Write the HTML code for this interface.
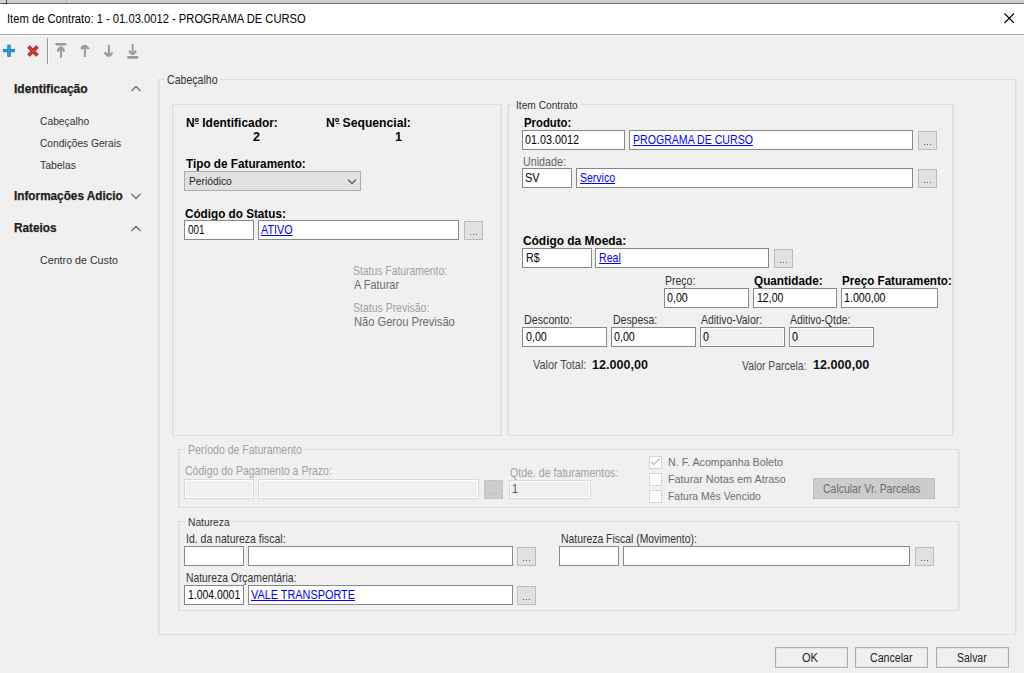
<!DOCTYPE html>
<html><head><meta charset="utf-8"><style>
html,body{margin:0;padding:0}
body{width:1024px;height:673px;position:relative;overflow:hidden;background:#f0f0f0;font-family:"Liberation Sans",sans-serif}
div{position:absolute}
.t{position:absolute;white-space:nowrap;line-height:0;transform-origin:0 0}
</style></head><body>
<div style="left:0px;top:0px;width:1024px;height:3px;background:#d0d0d0"></div>
<div style="left:0px;top:3px;width:1024px;height:1px;background:#6a6a6a"></div>
<div style="left:66px;top:0px;width:1px;height:3px;background:#b8b8b8"></div>
<div style="left:6px;top:0px;width:1px;height:3px;background:#3a4a50"></div>
<div style="left:3px;top:3px;width:4px;height:1px;background:#2a3035"></div>
<div style="left:4px;top:0px;width:1px;height:3px;background:#dedede"></div>
<div style="left:0px;top:4px;width:1024px;height:30px;background:#fff"></div>
<div style="left:0px;top:34px;width:1024px;height:1px;background:#a8a8a8"></div>
<div style="left:0px;top:35px;width:1024px;height:1px;background:#fbfbfb"></div>
<span class="t" style="left:6.60px;top:18.70px;font-size:12.65px;color:#000;transform:scaleX(0.8861);">Item de Contrato: 1 - 01.03.0012 - PROGRAMA DE CURSO</span>
<svg style="position:absolute;left:0;top:0" width="1024" height="34"><path d="M1004.5 13.5l9.5 9.5M1014 13.5l-9.5 9.5" stroke="#000" stroke-width="1.1" fill="none"/></svg>
<svg style="position:absolute;left:0;top:0" width="160" height="70">
<path d="M9 44.8v11.9M3.1 50.6h11.8" stroke="#22689a" stroke-width="3.4" fill="none"/>
<path d="M9 45.4v10.7M3.7 50.6h10.6" stroke="#1fa0dc" stroke-width="2.1" fill="none"/>
<path d="M28.5 46.5l9 9M37.5 46.5l-9 9" stroke="#8a3028" stroke-width="3.7" fill="none"/>
<path d="M28.8 46.8l8.4 8.4M37.2 46.8l-8.4 8.4" stroke="#da3530" stroke-width="2.5" fill="none"/>
<rect x="47" y="38" width="1" height="26" fill="#999"/><rect x="48" y="38" width="1" height="26" fill="#f9f9f9"/>
<g fill="#9c9c9c">
<polygon points="54.8,44.3 56.2,43 65.6,43 67,44.3 65.6,45.6 56.2,45.6"/>
<polygon points="57,51.7 57,49.3 60,46.3 61.8,46.3 64.8,49.3 64.8,51.7 63.3,51.7 61.9,50.4 60,50.4 58.5,51.7"/>
<rect x="60" y="50" width="2" height="7.8"/>
<polygon points="80.8,49.6 80.8,47.1 83.1,45 86.4,45 89.8,48.4 88,49.6 86.4,48.6 84,48.6 82.6,49.6"/>
<rect x="83.9" y="48" width="2" height="9"/>
<rect x="107.9" y="44.9" width="2" height="8.5"/>
<polygon points="103.6,53.3 105.2,51.8 107.2,53 110.6,53 112.6,51.8 112.6,54 110.5,56.8 107.1,56.8"/>
<rect x="131.7" y="44" width="2" height="7.5"/>
<polygon points="128.7,50.2 130.2,50.2 131.6,51.4 133.8,51.4 135.2,50.2 136.4,50.2 136.4,52.2 134,54.9 131.5,54.9 128.7,52.2"/>
<polygon points="126.6,57.35 127.9,56 137.5,56 138.9,57.35 137.5,58.7 127.9,58.7"/>
</g></svg>
<span class="t" style="left:14.00px;top:89.00px;font-size:12.06px;color:#1e1e1e;font-weight:bold;-webkit-text-stroke:0.25px #1e1e1e;">Identificação</span>
<span class="t" style="left:14.00px;top:196.30px;font-size:12.06px;color:#1e1e1e;font-weight:bold;transform:scaleX(0.9762);-webkit-text-stroke:0.25px #1e1e1e;">Informações Adicio</span>
<span class="t" style="left:14.00px;top:228.00px;font-size:12.06px;color:#1e1e1e;font-weight:bold;transform:scaleX(0.9782);-webkit-text-stroke:0.25px #1e1e1e;">Rateios</span>
<span class="t" style="left:39.80px;top:120.80px;font-size:11.63px;color:#333;transform:scaleX(0.8833);">Cabeçalho</span>
<span class="t" style="left:39.80px;top:142.70px;font-size:11.63px;color:#333;transform:scaleX(0.8769);">Condições Gerais</span>
<span class="t" style="left:40.00px;top:164.50px;font-size:11.63px;color:#333;transform:scaleX(0.8966);">Tabelas</span>
<span class="t" style="left:40.00px;top:260.10px;font-size:11.63px;color:#333;transform:scaleX(0.9193);">Centro de Custo</span>
<svg style="position:absolute;left:0;top:0" width="160" height="280">
<g stroke="#707070" stroke-width="1.3" fill="none">
<path d="M131.5 91l4.5-4.5 4.5 4.5"/>
<path d="M131.5 194l4.5 4.5 4.5-4.5"/>
<path d="M131.5 231l4.5-4.5 4.5 4.5"/>
</g></svg>
<div style="left:158px;top:79px;width:858px;height:556px;border:1px solid #dcdcdc;box-sizing:border-box"></div>
<div style="left:163.5px;top:74.2px;width:56.5px;height:13px;background:#f0f0f0"></div>
<span class="t" style="left:166.50px;top:80.20px;font-size:11.92px;color:#333;transform:scaleX(0.8875);">Cabeçalho</span>
<div style="left:172px;top:104px;width:330px;height:332px;border:1px solid #dcdcdc;box-sizing:border-box"></div>
<span class="t" style="left:186.00px;top:122.50px;font-size:13.08px;color:#000;font-weight:bold;transform:scaleX(0.9122);">Nº Identificador:</span>
<span class="t" style="left:253.30px;top:136.50px;font-size:13.52px;color:#000;font-weight:bold;transform:scaleX(0.93);">2</span>
<span class="t" style="left:326.00px;top:122.50px;font-size:13.08px;color:#000;font-weight:bold;transform:scaleX(0.9300);">Nº Sequencial:</span>
<span class="t" style="left:394.50px;top:136.50px;font-size:13.52px;color:#000;font-weight:bold;transform:scaleX(0.93);">1</span>
<div style="left:195px;top:123px;width:4px;height:1px;background:#444"></div>
<div style="left:336px;top:123px;width:4px;height:1px;background:#444"></div>
<span class="t" style="left:186.00px;top:163.50px;font-size:13.08px;color:#000;font-weight:bold;transform:scaleX(0.8975);">Tipo de Faturamento:</span>
<div style="left:184px;top:171px;width:177px;height:20px;border:1px solid #adadad;background:#e1e1e1;box-sizing:border-box"></div>
<span class="t" style="left:188.60px;top:180.80px;font-size:11.63px;color:#222;transform:scaleX(0.8836);">Periódico</span>
<svg style="position:absolute;left:0;top:0" width="400" height="200"><path d="M348 179.5l4 4 4-4" stroke="#606060" stroke-width="1.3" fill="none"/></svg>
<span class="t" style="left:185.00px;top:213.50px;font-size:13.08px;color:#000;font-weight:bold;transform:scaleX(0.8954);">Código do Status:</span>
<div style="left:184px;top:220px;width:70px;height:20px;border:1px solid #888;background:#fff;box-sizing:border-box"></div>
<span class="t" style="left:187.80px;top:229.90px;font-size:12.35px;color:#000;transform:scaleX(0.7961);">001</span>
<div style="left:258px;top:220px;width:201px;height:20px;border:1px solid #888;background:#fff;box-sizing:border-box"></div>
<span class="t" style="left:261.40px;top:229.90px;font-size:12.35px;color:#0000ff;transform:scaleX(0.8741);text-decoration:underline;">ATIVO</span>
<div style="left:464px;top:221px;width:19px;height:19px;border:1px solid #bcbcbc;background:#e1e1e1;box-sizing:border-box"></div>
<div style="left:470px;top:234px;width:1px;height:1px;background:#5a5070"></div>
<div style="left:473px;top:234px;width:1px;height:1px;background:#5a5070"></div>
<div style="left:476px;top:234px;width:1px;height:1px;background:#5a5070"></div>
<span class="t" style="left:353.00px;top:271.40px;font-size:11.92px;color:#a0a0a0;transform:scaleX(0.8720);">Status Faturamento:</span>
<span class="t" style="left:354.00px;top:285.00px;font-size:11.92px;color:#6d6d6d;transform:scaleX(0.9213);">A Faturar</span>
<span class="t" style="left:353.00px;top:308.00px;font-size:11.92px;color:#a0a0a0;transform:scaleX(0.8806);">Status Previsão:</span>
<span class="t" style="left:354.00px;top:322.00px;font-size:11.92px;color:#6d6d6d;transform:scaleX(0.9341);">Não Gerou Previsão</span>
<div style="left:508px;top:104px;width:445px;height:332px;border:1px solid #dcdcdc;box-sizing:border-box"></div>
<div style="left:513.4px;top:99px;width:67.89999999999998px;height:13px;background:#f0f0f0"></div>
<span class="t" style="left:516.40px;top:104.50px;font-size:11.63px;color:#333;transform:scaleX(0.8768);">Item Contrato</span>
<span class="t" style="left:523.70px;top:122.50px;font-size:13.08px;color:#000;font-weight:bold;transform:scaleX(0.8671);">Produto:</span>
<div style="left:522px;top:130px;width:103px;height:20px;border:1px solid #888;background:#fff;box-sizing:border-box"></div>
<span class="t" style="left:525.00px;top:139.50px;font-size:12.35px;color:#000;transform:scaleX(0.8738);">01.03.0012</span>
<div style="left:629px;top:130px;width:284px;height:20px;border:1px solid #888;background:#fff;box-sizing:border-box"></div>
<span class="t" style="left:632.50px;top:139.50px;font-size:12.35px;color:#0000ff;transform:scaleX(0.8571);text-decoration:underline;">PROGRAMA DE CURSO</span>
<div style="left:918px;top:131px;width:19px;height:19px;border:1px solid #bcbcbc;background:#e1e1e1;box-sizing:border-box"></div>
<div style="left:924px;top:144px;width:1px;height:1px;background:#5a5070"></div>
<div style="left:927px;top:144px;width:1px;height:1px;background:#5a5070"></div>
<div style="left:930px;top:144px;width:1px;height:1px;background:#5a5070"></div>
<span class="t" style="left:523.00px;top:161.50px;font-size:11.92px;color:#626262;transform:scaleX(0.9024);">Unidade:</span>
<div style="left:522px;top:168px;width:50px;height:20px;border:1px solid #888;background:#fff;box-sizing:border-box"></div>
<span class="t" style="left:525.00px;top:178.30px;font-size:12.35px;color:#000;transform:scaleX(0.8848);">SV</span>
<div style="left:576px;top:168px;width:337px;height:20px;border:1px solid #888;background:#fff;box-sizing:border-box"></div>
<span class="t" style="left:579.70px;top:178.30px;font-size:12.35px;color:#0000ff;transform:scaleX(0.8519);text-decoration:underline;">Servico</span>
<div style="left:918px;top:169px;width:19px;height:19px;border:1px solid #bcbcbc;background:#e1e1e1;box-sizing:border-box"></div>
<div style="left:924px;top:182px;width:1px;height:1px;background:#5a5070"></div>
<div style="left:927px;top:182px;width:1px;height:1px;background:#5a5070"></div>
<div style="left:930px;top:182px;width:1px;height:1px;background:#5a5070"></div>
<span class="t" style="left:522.70px;top:241.00px;font-size:13.08px;color:#000;font-weight:bold;transform:scaleX(0.9097);">Código da Moeda:</span>
<div style="left:522px;top:248px;width:70px;height:20px;border:1px solid #888;background:#fff;box-sizing:border-box"></div>
<span class="t" style="left:525.60px;top:258.00px;font-size:12.35px;color:#000;transform:scaleX(0.8608);">R$</span>
<div style="left:595px;top:248px;width:174px;height:20px;border:1px solid #888;background:#fff;box-sizing:border-box"></div>
<span class="t" style="left:599.20px;top:258.00px;font-size:12.35px;color:#0000ff;transform:scaleX(0.8583);text-decoration:underline;">Real</span>
<div style="left:774px;top:249px;width:19px;height:19px;border:1px solid #bcbcbc;background:#e1e1e1;box-sizing:border-box"></div>
<div style="left:780px;top:262px;width:1px;height:1px;background:#5a5070"></div>
<div style="left:783px;top:262px;width:1px;height:1px;background:#5a5070"></div>
<div style="left:786px;top:262px;width:1px;height:1px;background:#5a5070"></div>
<span class="t" style="left:665.20px;top:281.00px;font-size:11.92px;color:#333;transform:scaleX(0.8808);">Preço:</span>
<div style="left:664px;top:288px;width:85px;height:20px;border:1px solid #888;background:#fff;box-sizing:border-box"></div>
<span class="t" style="left:667.20px;top:298.20px;font-size:12.35px;color:#000;transform:scaleX(0.8649);">0,00</span>
<span class="t" style="left:753.90px;top:281.00px;font-size:13.08px;color:#000;font-weight:bold;transform:scaleX(0.8992);">Quantidade:</span>
<div style="left:753px;top:288px;width:84px;height:20px;border:1px solid #888;background:#fff;box-sizing:border-box"></div>
<span class="t" style="left:756.60px;top:298.20px;font-size:12.35px;color:#000;transform:scaleX(0.8544);">12,00</span>
<span class="t" style="left:842.00px;top:281.00px;font-size:13.08px;color:#000;font-weight:bold;transform:scaleX(0.8889);">Preço Faturamento:</span>
<div style="left:841px;top:288px;width:97px;height:20px;border:1px solid #888;background:#fff;box-sizing:border-box"></div>
<span class="t" style="left:844.00px;top:298.20px;font-size:12.35px;color:#000;transform:scaleX(0.8649);">1.000,00</span>
<span class="t" style="left:523.60px;top:320.00px;font-size:11.92px;color:#333;transform:scaleX(0.8993);">Desconto:</span>
<div style="left:522px;top:327px;width:85px;height:20px;border:1px solid #888;background:#fff;box-sizing:border-box"></div>
<span class="t" style="left:525.60px;top:337.00px;font-size:12.35px;color:#000;transform:scaleX(0.8649);">0,00</span>
<span class="t" style="left:612.50px;top:320.00px;font-size:11.92px;color:#333;transform:scaleX(0.8796);">Despesa:</span>
<div style="left:611px;top:327px;width:85px;height:20px;border:1px solid #888;background:#fff;box-sizing:border-box"></div>
<span class="t" style="left:614.20px;top:337.00px;font-size:12.35px;color:#000;transform:scaleX(0.8649);">0,00</span>
<span class="t" style="left:701.00px;top:320.00px;font-size:11.92px;color:#333;transform:scaleX(0.8727);">Aditivo-Valor:</span>
<div style="left:700px;top:327px;width:85px;height:20px;border:1px solid #888;background:#f0f0f0;box-sizing:border-box;box-shadow:inset 0 0 0 1px #fff"></div>
<span class="t" style="left:703.40px;top:337.00px;font-size:12.35px;color:#000;transform:scaleX(0.87);">0</span>
<span class="t" style="left:790.00px;top:319.80px;font-size:11.92px;color:#333;transform:scaleX(0.8779);">Aditivo-Qtde:</span>
<div style="left:789px;top:327px;width:85px;height:20px;border:1px solid #888;background:#f0f0f0;box-sizing:border-box;box-shadow:inset 0 0 0 1px #fff"></div>
<span class="t" style="left:792.10px;top:337.00px;font-size:12.35px;color:#000;transform:scaleX(0.87);">0</span>
<span class="t" style="left:532.70px;top:365.40px;font-size:11.92px;color:#4a4a4a;transform:scaleX(0.9119);">Valor Total:</span>
<span class="t" style="left:592.00px;top:364.90px;font-size:13.08px;color:#111;font-weight:bold;transform:scaleX(0.9605);">12.000,00</span>
<span class="t" style="left:742.20px;top:365.50px;font-size:11.92px;color:#4a4a4a;transform:scaleX(0.8707);">Valor Parcela:</span>
<span class="t" style="left:812.70px;top:365.00px;font-size:13.08px;color:#111;font-weight:bold;transform:scaleX(0.9657);">12.000,00</span>
<div style="left:178px;top:449px;width:781px;height:59px;border:1px solid #dcdcdc;box-sizing:border-box"></div>
<div style="left:184.5px;top:443.7px;width:119.69999999999999px;height:13px;background:#f0f0f0"></div>
<span class="t" style="left:187.50px;top:449.70px;font-size:11.92px;color:#a0a0a0;transform:scaleX(0.8814);">Período de Faturamento</span>
<span class="t" style="left:184.90px;top:471.20px;font-size:11.92px;color:#a0a0a0;transform:scaleX(0.8835);">Código do Pagamento a Prazo:</span>
<div style="left:184px;top:479px;width:70px;height:20px;border:1px solid #d9d9d9;background:#f0f0f0;box-sizing:border-box;box-shadow:inset 0 0 0 1px #fff"></div>
<div style="left:258px;top:479px;width:221px;height:20px;border:1px solid #d9d9d9;background:#f0f0f0;box-sizing:border-box;box-shadow:inset 0 0 0 1px #fff"></div>
<div style="left:484px;top:480px;width:19px;height:19px;border:1px solid #c4c4c4;background:#cccccc;box-sizing:border-box"></div>
<div style="left:490px;top:493px;width:1px;height:1px;background:#a0a0a0"></div>
<div style="left:493px;top:493px;width:1px;height:1px;background:#a0a0a0"></div>
<div style="left:496px;top:493px;width:1px;height:1px;background:#a0a0a0"></div>
<span class="t" style="left:510.00px;top:472.60px;font-size:11.92px;color:#a0a0a0;transform:scaleX(0.8891);">Qtde. de faturamentos:</span>
<div style="left:509px;top:480px;width:82px;height:19px;border:1px solid #d9d9d9;background:#f0f0f0;box-sizing:border-box;box-shadow:inset 0 0 0 1px #fff"></div>
<span class="t" style="left:512.20px;top:488.70px;font-size:12.35px;color:#555;transform:scaleX(0.87);">1</span>
<div style="left:649px;top:456px;width:13px;height:13px;border:1px solid #d4d4d4;background:#fff;box-sizing:border-box"></div>
<div style="left:649px;top:473px;width:13px;height:13px;border:1px solid #d4d4d4;background:#fff;box-sizing:border-box"></div>
<div style="left:649px;top:490px;width:13px;height:13px;border:1px solid #d4d4d4;background:#fff;box-sizing:border-box"></div>
<svg style="position:absolute;left:0;top:0" width="700" height="500"><path d="M651 461.6l2.7 2.9 6-5.9" stroke="#bdbdbd" stroke-width="1.3" fill="none"/></svg>
<span class="t" style="left:667.80px;top:462.10px;font-size:11.63px;color:#6d6d6d;transform:scaleX(0.9216);">N. F. Acompanha Boleto</span>
<span class="t" style="left:668.00px;top:478.80px;font-size:11.63px;color:#6d6d6d;transform:scaleX(0.9299);">Faturar Notas em Atraso</span>
<span class="t" style="left:668.00px;top:496.00px;font-size:11.63px;color:#6d6d6d;transform:scaleX(0.8977);">Fatura Mês Vencido</span>
<div style="left:813px;top:478px;width:122px;height:21px;border:1px solid #bfbfbf;background:#cccccc;box-sizing:border-box"></div>
<span class="t" style="left:823.00px;top:488.50px;font-size:12.35px;color:#6d6d6d;transform:scaleX(0.8481);">Calcular Vr. Parcelas</span>
<div style="left:178px;top:521px;width:781px;height:90px;border:1px solid #dcdcdc;box-sizing:border-box"></div>
<div style="left:184.6px;top:516.4px;width:47.70000000000002px;height:13px;background:#f0f0f0"></div>
<span class="t" style="left:187.60px;top:521.90px;font-size:11.63px;color:#333;transform:scaleX(0.8816);">Natureza</span>
<span class="t" style="left:186.00px;top:539.20px;font-size:11.92px;color:#333;transform:scaleX(0.8798);">Id. da natureza fiscal:</span>
<div style="left:184px;top:546px;width:60px;height:20px;border:1px solid #888;background:#fff;box-sizing:border-box"></div>
<div style="left:248px;top:546px;width:265px;height:20px;border:1px solid #888;background:#fff;box-sizing:border-box"></div>
<div style="left:517px;top:547px;width:19px;height:19px;border:1px solid #bcbcbc;background:#e1e1e1;box-sizing:border-box"></div>
<div style="left:523px;top:560px;width:1px;height:1px;background:#5a5070"></div>
<div style="left:526px;top:560px;width:1px;height:1px;background:#5a5070"></div>
<div style="left:529px;top:560px;width:1px;height:1px;background:#5a5070"></div>
<span class="t" style="left:186.00px;top:577.80px;font-size:11.92px;color:#333;transform:scaleX(0.8693);">Natureza Orçamentária:</span>
<div style="left:184px;top:585px;width:60px;height:20px;border:1px solid #888;background:#fff;box-sizing:border-box"></div>
<span class="t" style="left:188.00px;top:594.60px;font-size:12.35px;color:#000;transform:scaleX(0.8447);">1.004.0001</span>
<div style="left:248px;top:585px;width:265px;height:20px;border:1px solid #888;background:#fff;box-sizing:border-box"></div>
<span class="t" style="left:251.00px;top:594.60px;font-size:12.35px;color:#0000ff;transform:scaleX(0.8810);text-decoration:underline;">VALE TRANSPORTE</span>
<div style="left:517px;top:586px;width:19px;height:19px;border:1px solid #bcbcbc;background:#e1e1e1;box-sizing:border-box"></div>
<div style="left:523px;top:599px;width:1px;height:1px;background:#5a5070"></div>
<div style="left:526px;top:599px;width:1px;height:1px;background:#5a5070"></div>
<div style="left:529px;top:599px;width:1px;height:1px;background:#5a5070"></div>
<span class="t" style="left:560.50px;top:539.20px;font-size:11.92px;color:#333;transform:scaleX(0.8739);">Natureza Fiscal (Movimento):</span>
<div style="left:559px;top:546px;width:60px;height:20px;border:1px solid #888;background:#fff;box-sizing:border-box"></div>
<div style="left:623px;top:546px;width:287px;height:20px;border:1px solid #888;background:#fff;box-sizing:border-box"></div>
<div style="left:915px;top:547px;width:19px;height:19px;border:1px solid #bcbcbc;background:#e1e1e1;box-sizing:border-box"></div>
<div style="left:921px;top:560px;width:1px;height:1px;background:#5a5070"></div>
<div style="left:924px;top:560px;width:1px;height:1px;background:#5a5070"></div>
<div style="left:927px;top:560px;width:1px;height:1px;background:#5a5070"></div>
<div style="left:159px;top:80px;width:1px;height:554px;background:#e6e6e6"></div>
<div style="left:173px;top:105px;width:1px;height:329px;background:#e6e6e6"></div>
<div style="left:179px;top:450px;width:1px;height:57px;background:#e6e6e6"></div>
<div style="left:179px;top:522px;width:1px;height:88px;background:#e6e6e6"></div>
<div style="left:500px;top:105px;width:1px;height:329px;background:#e6e6e6"></div>
<div style="left:507px;top:105px;width:1px;height:330px;background:#e6e6e6"></div>
<div style="left:953px;top:105px;width:1px;height:330px;background:#e6e6e6"></div>
<div style="left:959px;top:450px;width:1px;height:57px;background:#e6e6e6"></div>
<div style="left:959px;top:522px;width:1px;height:88px;background:#e6e6e6"></div>
<div style="left:1016px;top:80px;width:1px;height:554px;background:#e6e6e6"></div>
<div style="left:775px;top:647px;width:73px;height:21px;border:1px solid #adadad;background:#f0f0f0;box-shadow:inset 0 0 0 1px #e3e3e3;box-sizing:border-box"></div>
<span class="t" style="left:802.00px;top:658.00px;font-size:12.50px;color:#222;transform:scaleX(0.8864);">OK</span>
<div style="left:855px;top:647px;width:73px;height:21px;border:1px solid #adadad;background:#f0f0f0;box-shadow:inset 0 0 0 1px #e3e3e3;box-sizing:border-box"></div>
<span class="t" style="left:869.60px;top:658.00px;font-size:12.50px;color:#222;transform:scaleX(0.8500);">Cancelar</span>
<div style="left:936px;top:647px;width:73px;height:21px;border:1px solid #adadad;background:#f0f0f0;box-shadow:inset 0 0 0 1px #e3e3e3;box-sizing:border-box"></div>
<span class="t" style="left:957.20px;top:658.00px;font-size:12.50px;color:#222;transform:scaleX(0.8378);">Salvar</span>
</body></html>
